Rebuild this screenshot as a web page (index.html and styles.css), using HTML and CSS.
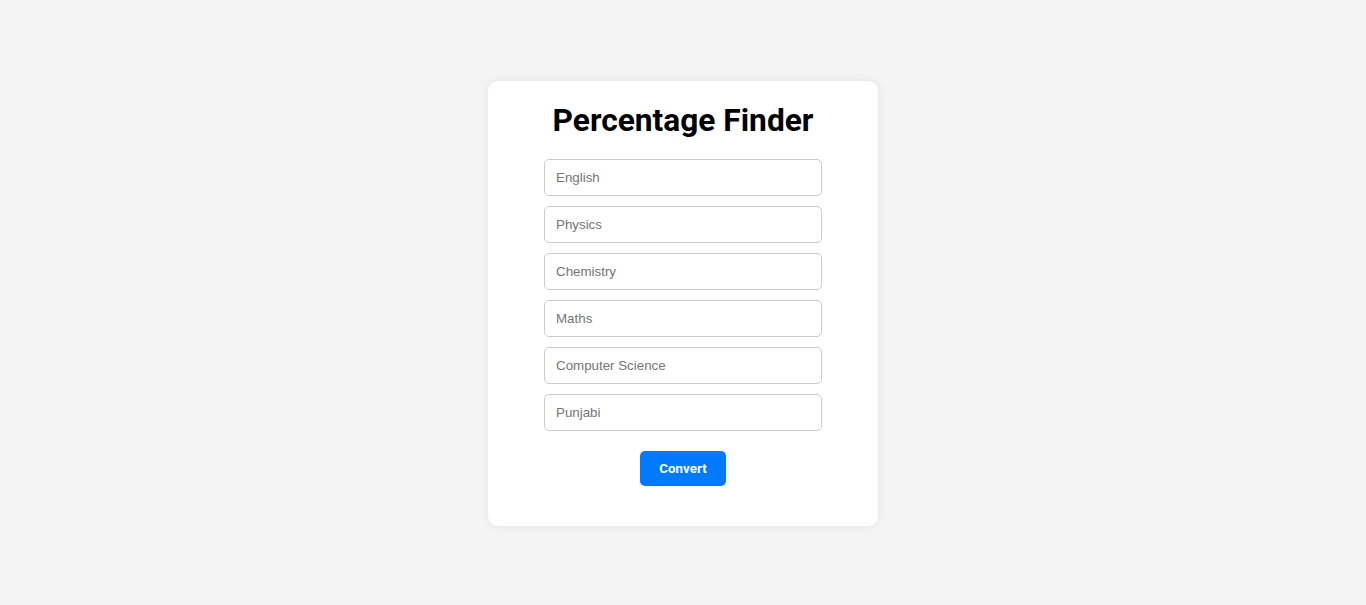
FILE: index.html
```html
<!DOCTYPE html>
<html lang="en">
<head>
<meta charset="utf-8">
<title>Percentage Finder</title>
<link rel="stylesheet" href="styles.css">
</head>
<body>
<div class="card">
  <h1 class="title">Percentage Finder</h1>
  <form class="form">
    <input class="field" type="number" placeholder="English">
    <input class="field" type="number" placeholder="Physics">
    <input class="field" type="number" placeholder="Chemistry">
    <input class="field" type="number" placeholder="Maths">
    <input class="field" type="number" placeholder="Computer Science">
    <input class="field" type="number" placeholder="Punjabi">
    <button class="btn" type="button">Convert</button>
  </form>
</div>
</body>
</html>
```

FILE: styles.css
```css
html, body {
  margin: 0;
  padding: 0;
}
body {
  background: #f4f4f4;
  font-family: "Liberation Sans", Arial, sans-serif;
  display: flex;
  justify-content: center;
  padding-top: 81px;
  min-height: 605px;
  box-sizing: border-box;
}
.card {
  width: 390px;
  box-sizing: border-box;
  background: #fff;
  border-radius: 10px;
  box-shadow: 0 0 10px rgba(0, 0, 0, 0.08);
  padding: 21px 20px 40px;
  display: flex;
  flex-direction: column;
  align-items: center;
  align-self: flex-start;
}
.title {
  font-family: Roboto, "Liberation Sans", sans-serif;
  font-weight: 700;
  font-size: 31.7px;
  color: #000;
  margin: 0 0 20px;
  line-height: normal;
}
.form {
  display: flex;
  flex-direction: column;
  align-items: center;
  gap: 10px;
}
.field {
  width: 278px;
  height: 37px;
  box-sizing: border-box;
  padding: 0 10px 0 11px;
  border: 1px solid #ccc;
  border-radius: 5px;
  font-family: "Liberation Sans", Arial, sans-serif;
  font-size: 13.333px;
  color: #333;
  outline: none;
  -moz-appearance: textfield;
}
.field::-webkit-outer-spin-button,
.field::-webkit-inner-spin-button {
  -webkit-appearance: none;
  margin: 0;
}
.field::placeholder {
  color: #757575;
}
.btn {
  margin-top: 10px;
  width: 86px;
  height: 35px;
  border: none;
  border-radius: 5px;
  background: #007bff;
  color: #fff;
  font-family: Roboto, "Liberation Sans", sans-serif;
  font-weight: 700;
  font-size: 13.333px;
  cursor: pointer;
}
```
